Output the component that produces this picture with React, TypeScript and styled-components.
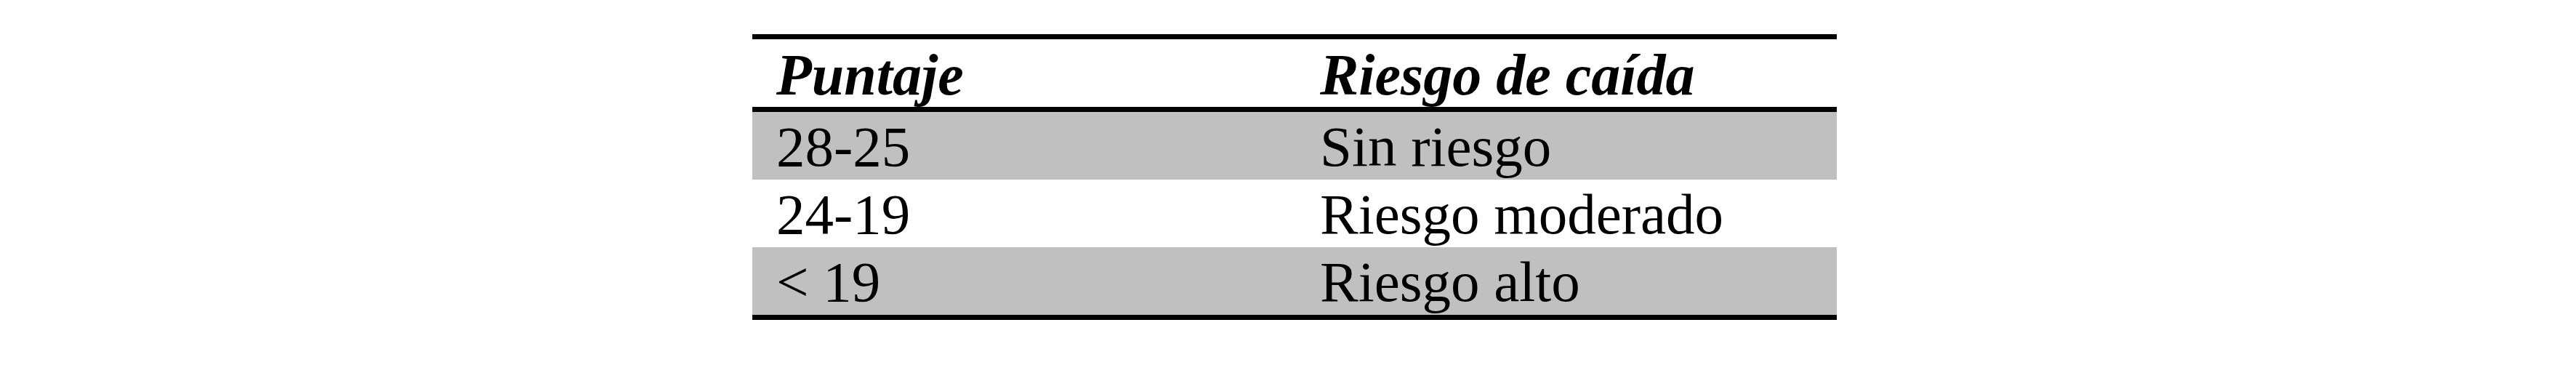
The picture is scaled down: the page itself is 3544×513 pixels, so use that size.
import styled, { createGlobalStyle } from "styled-components";

const rows = [
  { score: "28-25", risk: "Sin riesgo", shaded: true },
  { score: "24-19", risk: "Riesgo moderado", shaded: false },
  { score: "< 19", risk: "Riesgo alto", shaded: true },
];

function App() {
  return (
    <>
      <GlobalStyle />
      <Page>
        <Table>
          <HeaderRow>
            <HeadCell>Puntaje</HeadCell>
            <HeadCell>Riesgo de caída</HeadCell>
          </HeaderRow>
          {rows.map((row, i) => (
            <BodyRow key={row.score} $shaded={row.shaded} $last={i === rows.length - 1}>
              <BodyCell>{row.score}</BodyCell>
              <BodyCell>{row.risk}</BodyCell>
            </BodyRow>
          ))}
        </Table>
      </Page>
    </>
  );
}

const GlobalStyle = createGlobalStyle`
  html, body {
    margin: 0;
    background: #ffffff;
  }
  body {
    font-family: "Liberation Serif", "Times New Roman", serif;
    color: #000000;
  }
`;

const Page = styled.div`
  width: 3544px;
  height: 513px;
  padding: 47px 0 0 1035px;
  box-sizing: border-box;
`;

const Table = styled.div`
  width: 1492px;
  display: flex;
  flex-direction: column;
`;

const RowBase = styled.div`
  display: grid;
  grid-template-columns: 748px 1fr;
`;

const HeaderRow = styled(RowBase)`
  height: 93px;
  border-top: 7px solid #000;
  border-bottom: 7px solid #000;
`;

const BodyRow = styled(RowBase)<{ $shaded?: boolean; $last?: boolean }>`
  height: 93px;
  background: ${({ $shaded }) => ($shaded ? "#c0c0c0" : "#ffffff")};
  border-bottom: ${({ $last }) => ($last ? "7px solid #000" : "none")};
`;

const HeadCell = styled.div`
  padding: 6px 0 0 33px;
  font-size: 80px;
  line-height: 86px;
  font-weight: 700;
  font-style: italic;
  white-space: nowrap;
`;

const BodyCell = styled.div`
  padding: 5px 0 0 33px;
  font-size: 79px;
  line-height: 86px;
  white-space: nowrap;
`;

export default App;
